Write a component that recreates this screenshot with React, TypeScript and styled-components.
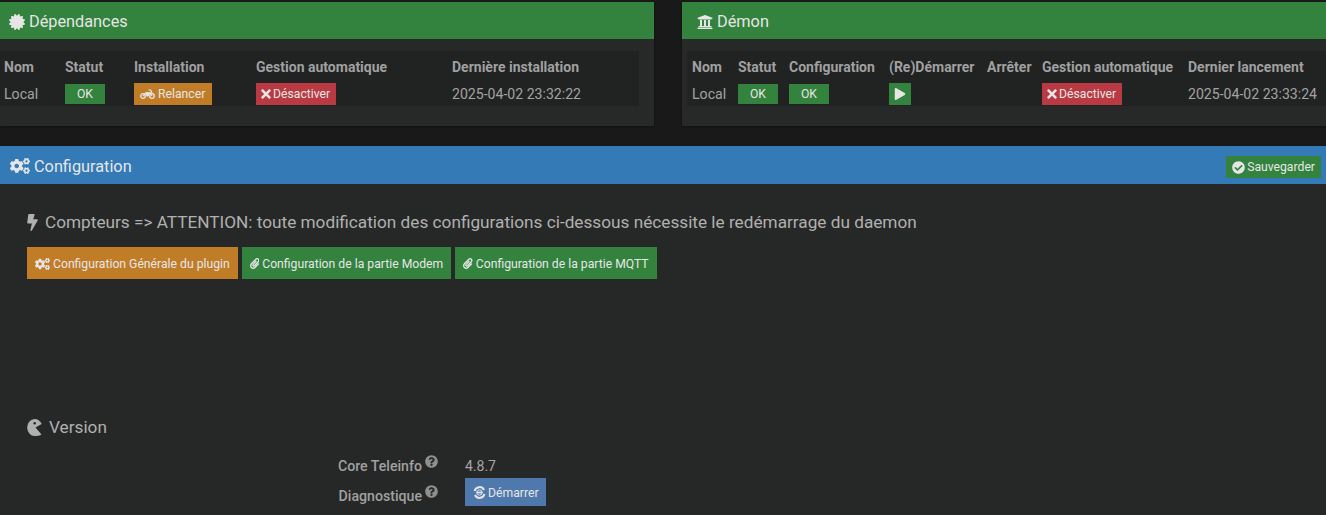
import React from 'react';
import styled, { createGlobalStyle } from 'styled-components';
import { FaCertificate, FaUniversity, FaTimes, FaPlay, FaCogs, FaCheckCircle, FaBolt, FaPaperclip, FaQuestionCircle } from 'react-icons/fa';

const Global = createGlobalStyle`
  html, body { margin: 0; padding: 0; background: #191919; height: 515px; overflow: hidden; }
  body { font-family: Roboto, "Liberation Sans", sans-serif; font-size: 14px; color: #a6a6a6; }
  * { box-sizing: border-box; }
`;

const Page = styled.div`
  display: flex;
  flex-direction: column;
  height: 515px;
  padding-top: 2px;
`;

const TopRow = styled.div`
  display: grid;
  grid-template-columns: 654px 644px;
  column-gap: 28px;
`;

const Panel = styled.section`
  background: #272929;
  height: 124px;
  box-shadow: 0 1px 2px rgba(0, 0, 0, 0.3);
`;

const PanelHeader = styled.header<{ $color: string; $pad: number }>`
  height: ${p => (p.$color === 'blue' ? 38 : 37)}px;
  background: ${p => (p.$color === 'blue' ? '#337ab7' : '#33823e')};
  color: #e6e6e6;
  font-size: 16.3px;
  display: flex;
  align-items: center;
  gap: 4px;
  padding: 2px 5px 0 ${p => p.$pad}px;
  svg { font-size: 16px; }
`;

const HeaderTitle = styled.span`
  flex: 1;
`;

const TableWrap = styled.div<{ $left: number; $right: number }>`
  padding: 12px ${p => p.$right}px 0 ${p => p.$left}px;
`;

const Table = styled.table<{ $pad: number }>`
  width: 100%;
  border-collapse: collapse;
  table-layout: fixed;
  background: #212222;
  font-size: 14px;
  th, td { padding-left: ${p => p.$pad}px; }
`;

const Col = styled.col<{ $w: number }>`
  width: ${p => p.$w}px;
`;

const Th = styled.th`
  text-align: left;
  font-weight: 700;
  color: #a0a0a0;
  height: 30px;
  padding-top: 2px;
  white-space: nowrap;
`;

const Td = styled.td`
  height: 25px;
  font-size: 14.1px;
  color: #a3a3a3;
  white-space: nowrap;
  vertical-align: middle;
`;

const Badge = styled.span`
  display: block;
  width: 40px;
  height: 20px;
  line-height: 20px;
  background: #33823e;
  color: #e6e6e6;
  font-size: 12.2px;
  text-align: center;
`;

const Button = styled.span<{ $bg: string }>`
  display: inline-flex;
  align-items: center;
  gap: 3px;
  height: 22px;
  padding: 0 6px;
  background: ${p => p.$bg};
  color: #e6e6e6;
  font-size: 12.2px;
  white-space: nowrap;
  svg { font-size: 12px; flex: none; }
`;

const DangerButton = styled(Button)`
  gap: 2px;
  padding-left: 5px;
`;

const PlayButton = styled(Button)`
  padding: 0 5px;
`;

const SaveButton = styled(Button)`
  gap: 2px;
  margin-top: 2px;
  svg { font-size: 13px; }
`;

const ConfigPanel = styled.section`
  flex: 1;
  margin-top: 20px;
  background: #262828;
`;

const ConfigBody = styled.div`
  padding: 27px 0 0 27px;
`;

const Legend = styled.h4`
  margin: 0;
  font-size: 17.22px;
  font-weight: 400;
  line-height: 22px;
  color: #b0b0b0;
  display: flex;
  align-items: center;
  gap: 7px;
  white-space: nowrap;
  svg { flex: none; }
`;

const Tabs = styled.div`
  display: flex;
  gap: 4px;
  margin-top: 14px;
`;

const TabButton = styled(Button)`
  height: 32px;
  padding: 1px 8px 0;
  gap: 3px;
`;

const VersionLegend = styled(Legend)`
  margin-top: 137px;
`;

const FormGrid = styled.div`
  display: grid;
  grid-template-columns: 411px auto;
  grid-template-rows: 22px 28px;
  column-gap: 27px;
  margin-top: 18px;
  justify-content: start;
`;

const Label = styled.label<{ $top: number }>`
  display: flex;
  justify-content: flex-end;
  align-items: flex-start;
  gap: 3px;
  font-weight: 500;
  font-size: 14.15px;
  color: #a0a0a0;
  line-height: 16px;
  padding-top: ${p => p.$top}px;
  svg { font-size: 13px; margin-top: -3px; color: #8f8f8f; }
`;

const Value = styled.div`
  line-height: 20px;
  color: #a6a6a6;
`;

const StartButton = styled(Button)`
  height: 28px;
  padding: 1px 7px 0 8px;
  gap: 2px;
`;

const WideCogs = styled(FaCogs)`
  width: 1.25em;
  height: 1em;
`;

const Cross = styled(FaTimes)`
  && { font-size: 14px; }
  width: 10px;
`;

const Clip = styled(FaPaperclip)`
  && { font-size: 13px; }
  width: 9.5px;
`;

const Bolt = styled(FaBolt)`
  width: 11px;
  height: 17px;
`;

const RelaunchButton = styled(Button)`
  padding-right: 7px;
`;

const Bike = () => (
  <svg width="15" height="12" viewBox="0 0 15 12" fill="none" stroke="currentColor" aria-hidden="true">
    <circle cx="3" cy="8" r="2.3" strokeWidth="1.3" />
    <circle cx="12" cy="8" r="2.3" strokeWidth="1.3" />
    <path d="M3 8l3-3.2h4.4L12 8" strokeWidth="1.3" />
    <path d="M8.5 2h2.2l1.3 3" strokeWidth="1.2" />
    <path d="M5.5 4.5h5l-2 4h-2z" fill="currentColor" stroke="none" />
  </svg>
);

const Pacman = () => (
  <svg width="15" height="17" viewBox="0 0 15 17" aria-hidden="true">
    <path fill="currentColor" d="M7.5 0C11 0 13.5 2 14.7 5L8.5 8.5l6 7C13 16.5 10 17 8 17A7.6 8.5 0 0 1 7.5 0z" />
    <circle cx="7.7" cy="4.2" r="1.2" fill="#262828" />
  </svg>
);

const Diagnostic = () => (
  <svg width="13" height="13" viewBox="0 0 13 13" fill="none" stroke="currentColor" aria-hidden="true">
    <path d="M1.6 5A5 5 0 0 1 11 4" strokeWidth="2" />
    <path d="M11.4 8A5 5 0 0 1 2 9" strokeWidth="2" />
    <path d="M3.5 6.5h6" strokeWidth="1.6" />
    <circle cx="6.5" cy="6.5" r="2.6" strokeWidth="1" />
  </svg>
);

export default function App() {
  return (
    <Page>
      <Global />
      <TopRow>
        <Panel>
          <PanelHeader $color="green" $pad={9}>
            <FaCertificate />
            <HeaderTitle>Dépendances</HeaderTitle>
          </PanelHeader>
          <TableWrap $left={0} $right={15}>
            <Table $pad={4}>
              <colgroup>
                <Col $w={61} /><Col $w={69} /><Col $w={122} /><Col $w={196} /><Col $w={191} />
              </colgroup>
              <thead>
                <tr><Th>Nom</Th><Th>Statut</Th><Th>Installation</Th><Th>Gestion automatique</Th><Th>Dernière installation</Th></tr>
              </thead>
              <tbody>
                <tr>
                  <Td>Local</Td>
                  <Td><Badge>OK</Badge></Td>
                  <Td><RelaunchButton $bg="#c17c28"><Bike />Relancer</RelaunchButton></Td>
                  <Td><DangerButton $bg="#b93a42"><Cross />Désactiver</DangerButton></Td>
                  <Td>2025-04-02 23:32:22</Td>
                </tr>
              </tbody>
            </Table>
          </TableWrap>
        </Panel>
        <Panel>
          <PanelHeader $color="green" $pad={15}>
            <FaUniversity />
            <HeaderTitle>Démon</HeaderTitle>
          </PanelHeader>
          <TableWrap $left={5} $right={0}>
            <Table $pad={5}>
              <colgroup>
                <Col $w={46} /><Col $w={51} /><Col $w={100} /><Col $w={98} /><Col $w={55} /><Col $w={146} /><Col $w={143} />
              </colgroup>
              <thead>
                <tr><Th>Nom</Th><Th>Statut</Th><Th>Configuration</Th><Th>(Re)Démarrer</Th><Th>Arrêter</Th><Th>Gestion automatique</Th><Th>Dernier lancement</Th></tr>
              </thead>
              <tbody>
                <tr>
                  <Td>Local</Td>
                  <Td><Badge>OK</Badge></Td>
                  <Td><Badge>OK</Badge></Td>
                  <Td><PlayButton $bg="#33823e"><FaPlay /></PlayButton></Td>
                  <Td></Td>
                  <Td><DangerButton $bg="#b93a42"><Cross />Désactiver</DangerButton></Td>
                  <Td>2025-04-02 23:33:24</Td>
                </tr>
              </tbody>
            </Table>
          </TableWrap>
        </Panel>
      </TopRow>
      <ConfigPanel>
        <PanelHeader $color="blue" $pad={10}>
          <WideCogs />
          <HeaderTitle>Configuration</HeaderTitle>
          <SaveButton $bg="#33823e"><FaCheckCircle />Sauvegarder</SaveButton>
        </PanelHeader>
        <ConfigBody>
          <Legend><Bolt />Compteurs =&gt; ATTENTION: toute modification des configurations ci-dessous nécessite le redémarrage du daemon</Legend>
          <Tabs>
            <TabButton $bg="#c17c28"><WideCogs />Configuration Générale du plugin</TabButton>
            <TabButton $bg="#33823e"><Clip />Configuration de la partie Modem</TabButton>
            <TabButton $bg="#33823e"><Clip />Configuration de la partie MQTT</TabButton>
          </Tabs>
          <VersionLegend><Pacman />Version</VersionLegend>
          <FormGrid>
            <Label $top={2}>Core Teleinfo<FaQuestionCircle /></Label>
            <Value>4.8.7</Value>
            <Label $top={10}>Diagnostique<FaQuestionCircle /></Label>
            <div><StartButton $bg="#4f79ad"><Diagnostic />Démarrer</StartButton></div>
          </FormGrid>
        </ConfigBody>
      </ConfigPanel>
    </Page>
  );
}
